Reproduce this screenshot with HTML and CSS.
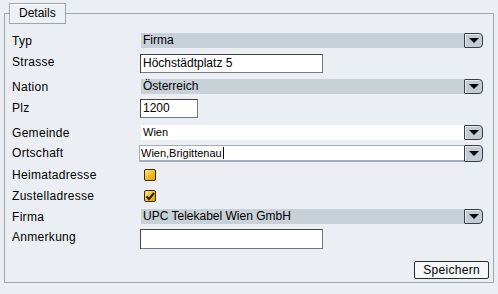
FILE: index.html
```html
<!DOCTYPE html>
<html lang="de">
<head>
<meta charset="utf-8">
<title>Details</title>
<link rel="stylesheet" href="styles.css">
</head>
<body>
<fieldset class="panel">
  <legend class="panel-legend">Details</legend>
  <div class="form">
    <div class="label">Typ</div>
    <div class="select gray"><span class="select-text">Firma</span><span class="arrow"></span></div>

    <div class="label">Strasse</div>
    <div class="input wide">Höchstädtplatz 5</div>

    <div class="label">Nation</div>
    <div class="select gray"><span class="select-text">Österreich</span><span class="arrow"></span></div>

    <div class="label label-low">Plz</div>
    <div class="input short">1200</div>

    <div class="label">Gemeinde</div>
    <div class="select white"><span class="select-text small">Wien</span><span class="arrow"></span></div>

    <div class="label">Ortschaft</div>
    <div class="combo"><span class="combo-text">Wien,Brigittenau<span class="caret"></span></span><span class="arrow"></span></div>

    <div class="label label-check">Heimatadresse</div>
    <div class="check"></div>

    <div class="label label-check">Zustelladresse</div>
    <div class="check checked"><svg width="10" height="10" viewBox="0 0 10 10"><path d="M1.5 5.5 L4 8 L9 2" fill="none" stroke="#2a1e00" stroke-width="2"/></svg></div>

    <div class="label">Firma</div>
    <div class="select gray"><span class="select-text">UPC Telekabel Wien GmbH</span><span class="arrow"></span></div>

    <div class="label">Anmerkung</div>
    <div class="input wide tall"></div>
  </div>
  <div class="actions">
    <button class="btn" type="button">Speichern</button>
  </div>
</fieldset>
</body>
</html>
```

FILE: styles.css
```css
html, body {
  margin: 0;
  padding: 0;
  background: #ebeff3;
  font-family: "Liberation Sans", Arial, sans-serif;
  font-size: 12px;
  color: #000;
}

.panel {
  margin: 3px 4px 0 4px;
  padding: 0 4px 3px 4px;
  border: 1px solid #9ea5ab;
  min-inline-size: 0;
}

.panel-legend {
  padding: 2px 9px 2px 9px;
  border: 1px solid #9ea5ab;
  box-shadow: inset 1px 1px 0 #ffffff;
  line-height: 15px;
  background: #eef1f4;
}

.form {
  margin-top: 9px;
  display: grid;
  grid-template-columns: 128px 1fr;
  grid-template-rows: 21px 25px 20px 26px 20px 24px 21px 19px 20px 20px;
  align-items: start;
  padding-left: 3px;
}

.label {
  line-height: 14px;
  margin-top: 1px;
  letter-spacing: 0.3px;
}

.label-low {
  margin-top: 2px;
}

.label-check {
  margin-top: -1px;
}

.select {
  display: flex;
  width: 343px;
  height: 15px;
}

.select-text {
  flex: 1;
  margin-left: 1px;
  padding-left: 2px;
  line-height: 15px;
}

.gray .select-text {
  background: #c8d0d8;
}

.white .select-text {
  background: #ffffff;
}

.small {
  font-size: 11px;
}

.arrow {
  width: 17px;
  height: 13px;
  border: 1px solid #3a3f44;
  border-radius: 1px 4px 4px 1px;
  background: #c3ccd5;
  box-shadow: inset 1px 1px 0 #e6ebf0;
  position: relative;
}

.arrow::after {
  content: "";
  position: absolute;
  left: 4px;
  top: 4px;
  border-left: 5px solid transparent;
  border-right: 5px solid transparent;
  border-top: 5px solid #000;
}

.input {
  height: 17px;
  border: 1px solid #777;
  border-top-color: #444;
  border-left-color: #444;
  background: #fff;
  padding-left: 2px;
  line-height: 17px;
  box-sizing: content-box;
}

.wide {
  width: 179px;
}

.short {
  width: 54px;
}

.tall {
  height: 18px;
}

.combo {
  display: flex;
  width: 344px;
  margin-left: -1px;
  height: 17px;
}

.combo-text {
  flex: 1;
  background: #fff;
  border-top: 1px solid #a3adb8;
  border-left: 1px solid #a3adb8;
  border-bottom: 2px solid #a3adb8;
  font-size: 11px;
  line-height: 14px;
  padding-left: 1px;
  display: flex;
  align-items: center;
}

.caret {
  display: inline-block;
  width: 1px;
  height: 12px;
  background: #000;
  margin-left: 1px;
}

.combo .arrow {
  height: 15px;
}

.combo .arrow::after {
  top: 5px;
}

.check {
  width: 10px;
  height: 10px;
  margin-left: 4px;
  border: 1px solid #3b2c00;
  border-radius: 2px;
  background: linear-gradient(135deg, #fde58a 0%, #f3c02a 50%, #e0a000 100%);
  display: flex;
  align-items: center;
  justify-content: center;
}

.check svg {
  display: block;
}

.actions {
  display: flex;
  justify-content: flex-end;
  margin-top: 12px;
}

.btn {
  font-family: "Liberation Sans", Arial, sans-serif;
  font-size: 12px;
  line-height: 14px;
  padding: 1px 8px;
  margin: 0;
  border: 1px solid #2b2b2b;
  border-radius: 2px;
  background: #f5f7f9;
  color: #000;
  letter-spacing: 0.3px;
}
```
